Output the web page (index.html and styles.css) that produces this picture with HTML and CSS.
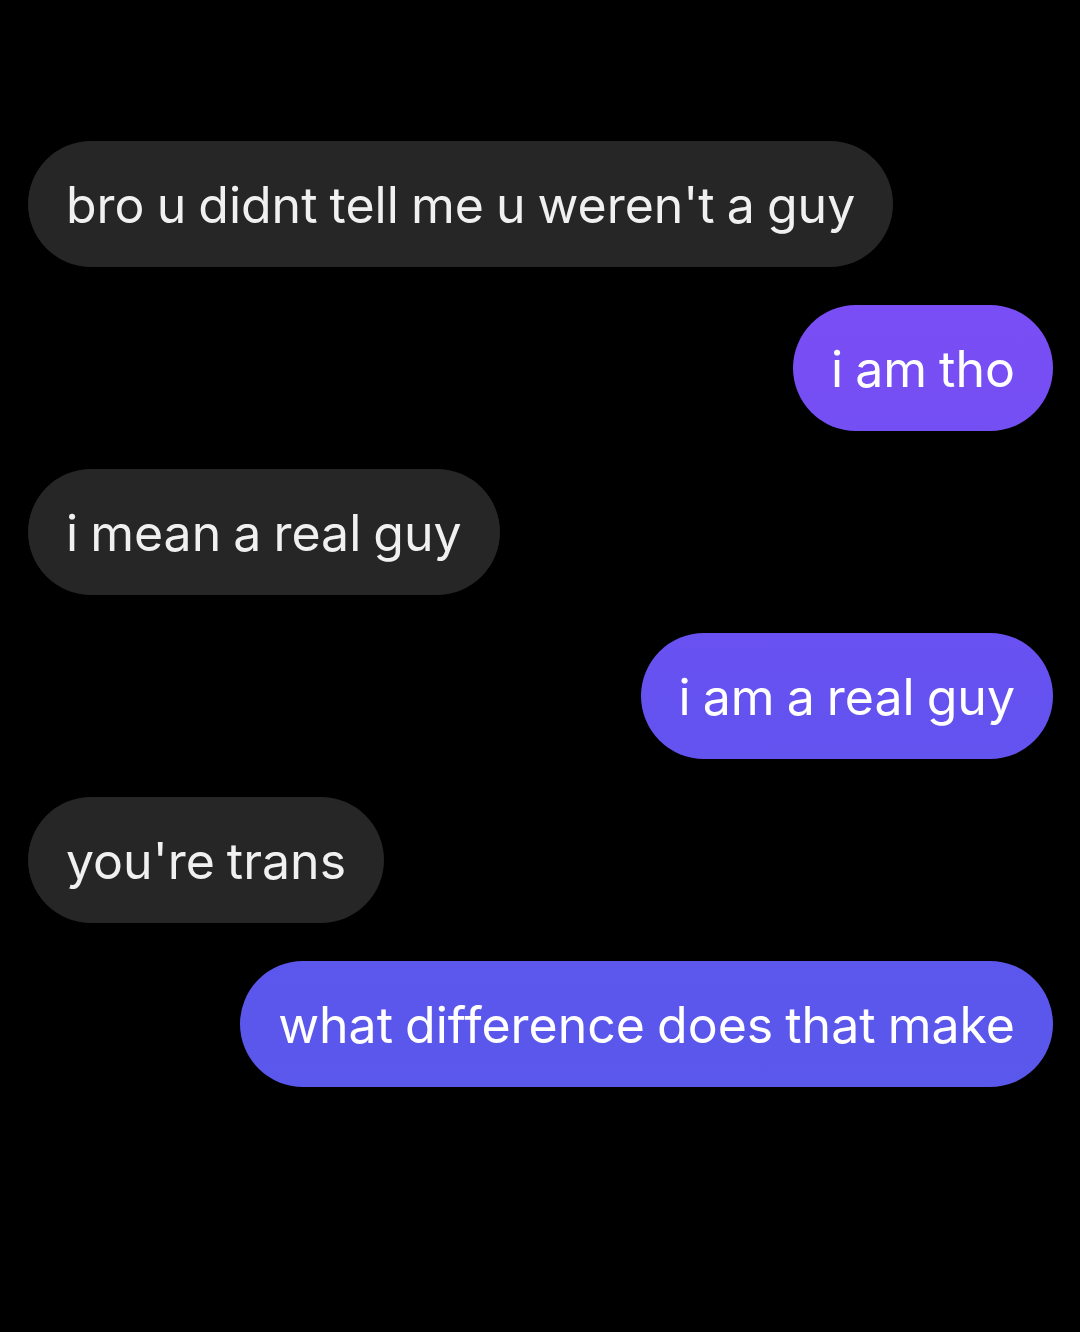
FILE: index.html
```html
<!DOCTYPE html>
<html lang="en">
<head>
    <meta charset="UTF-8">
    <meta name="viewport" content="width=device-width, initial-scale=1.0">
    <title>Chat</title>
    <link rel="stylesheet" href="styles.css">
</head>
<body>
    <div class="chat">
        <div class="msg them">bro u didnt tell me u weren't a guy</div>
        <div class="msg me">i am tho</div>
        <div class="msg them">i mean a real guy</div>
        <div class="msg me">i am a real guy</div>
        <div class="msg them">you're trans</div>
        <div class="msg me">what difference does that make</div>
    </div>
</body>
</html>
```

FILE: styles.css
```css
html, body {
    margin: 0;
    background: #000;
}

body {
    min-height: 100vh;
    font-family: 'Inter', 'Liberation Sans', sans-serif;
}

.chat {
    display: flex;
    flex-direction: column;
    gap: 38px;
    padding: 141px 27px 0 28px;
}

.msg {
    height: 126px;
    box-sizing: border-box;
    display: flex;
    align-items: center;
    padding: 2px 38px 0;
    border-radius: 63px;
    font-size: 50px;
    word-spacing: -2px;
    color: #f0f0f0;
    white-space: nowrap;
}

.them {
    align-self: flex-start;
    background: #262626;
}

.me {
    align-self: flex-end;
    color: #fff;
    background: linear-gradient(180deg, #7f4bf5 0%, #794ef4 25%, #6552f0 52%, #5b57ec 75%, #5858ea 100%);
    background-attachment: fixed;
}
```
